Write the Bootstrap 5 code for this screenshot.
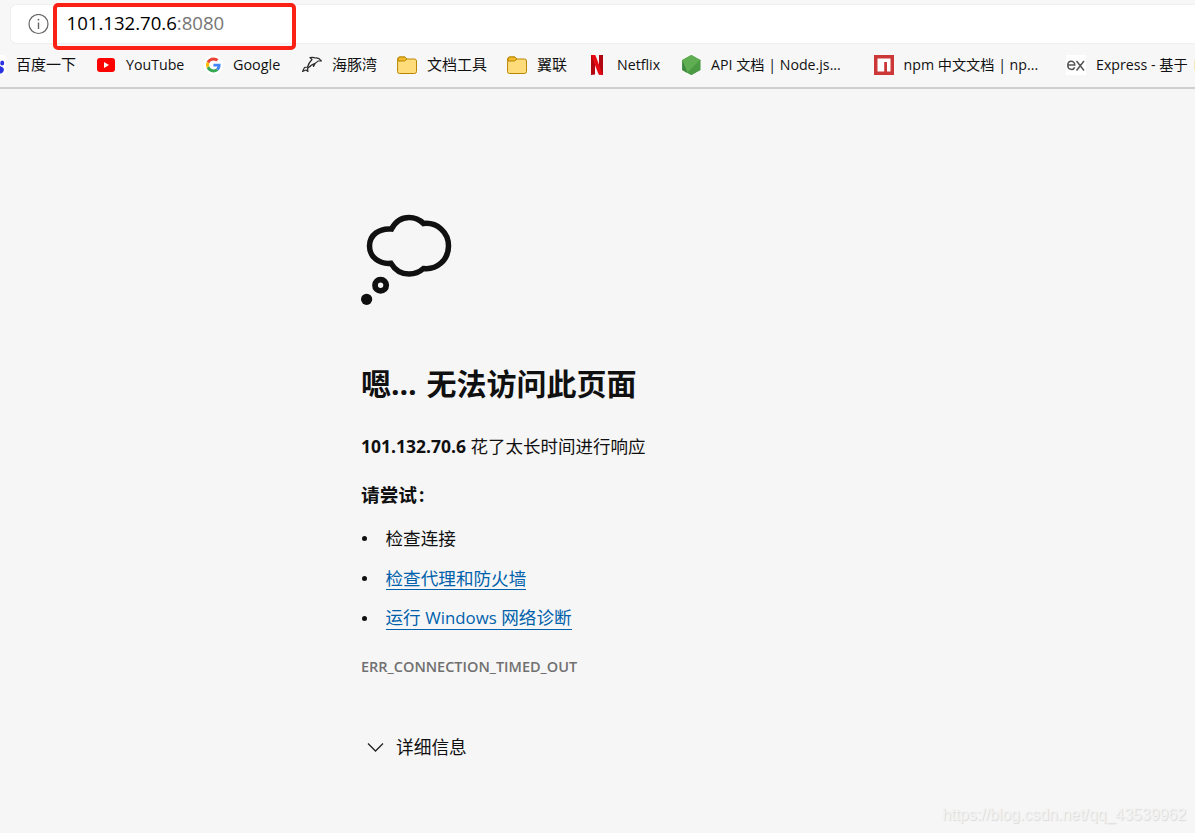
<!DOCTYPE html>
<html lang="zh-CN">
<head>
<meta charset="utf-8">
<title>101.132.70.6</title>
<link href="https://cdn.jsdelivr.net/npm/bootstrap@5.3.0/dist/css/bootstrap.min.css" rel="stylesheet">
<style>
body{background:#f6f6f6;color:#101010;font-family:"Open Sans","Noto Sans CJK SC",sans-serif;height:833px;overflow:hidden}
.chrome{height:89px;background:#f7f7f7;border-bottom:2px solid #cfcfcf}
.address{margin:5px 0 0 11px;height:38px;border-radius:5px 0 0 5px;background:#fff;box-shadow:0 0 2px #ddd}
.info-icon{margin-left:17px}
.url{margin-left:17.500px;font-size:18.6px;line-height:36px;padding-bottom:2px;color:#000;white-space:nowrap}
.url span{color:#767676}
.redbox{left:53px;top:3px;width:243px;height:47px;border:4px solid #fc2115;border-radius:5px}
.marks{height:44px;margin-left:-14px;font-size:14.2px;color:#111}
.mk{flex:none;display:flex;align-items:center;gap:10px;white-space:nowrap;line-height:20px}
.mk svg{flex:none;width:20px;height:20px;display:block}
.zh{font-size:15px}
.mk>.zh{padding-bottom:2px}
.content-col{margin-left:361px;padding-top:125px}
.cloud{display:block;margin-left:-1px}
h1{font-size:30px;font-weight:700;line-height:40px;margin:56px 0 0;word-spacing:2px;white-space:nowrap}
.reason{font-size:17.5px;line-height:24px;margin:30px 0 0}
.try{font-size:18.7px;font-weight:700;line-height:24px;margin:25px 0 0}
.try span{margin-left:2px}
.tips{margin:11px 0 0;padding:0;list-style:none;font-size:17.6px;line-height:40px}
.tips li{display:flex;align-items:center;height:40px}
.tips li::before{content:"";width:5px;height:5px;border-radius:50%;background:#101010;margin:1px 18.500px 0 1px}
.tips a{color:#0061ab;text-decoration:none;border-bottom:1px solid #0061ab;line-height:22px}
.win{font-size:16.8px}
.code{font-size:14.5px;font-weight:600;line-height:20px;color:#707070;margin:19px 0 0}
.more{font-size:17.7px;line-height:24px;margin:58px 0 0 6px;gap:12px}
.watermark{right:9px;bottom:8px;font:15.9px/20px "Liberation Sans",sans-serif;color:#f3f3f3;text-shadow:1px 1px 1px #d8d8d8}
</style>
</head>
<body class="position-relative">
<header class="chrome">
  <div class="d-flex flex-column">
    <div class="address d-flex align-items-center">
      <svg class="info-icon" width="21" height="21" viewBox="0 0 21 21" fill="none" stroke="#666"><circle cx="10.5" cy="10" r="9.5" stroke-width="1.2"/><path d="M10.5 8.5V15" stroke-width="1.4"/><circle cx="10.5" cy="5.7" r=".9" fill="#666" stroke="none"/></svg>
      <div class="url">101.132.70.6<span>:8080</span></div>
    </div>
    <nav class="marks d-flex align-items-center">
      <div class="mk" style="width:110px"><svg viewBox="0 0 20 20"><rect width="20" height="20" rx="3" fill="#fff"/><g fill="#2932e1"><ellipse cx="7" cy="4" rx="2" ry="3"/><ellipse cx="12" cy="4" rx="2" ry="3"/><ellipse cx="16.2" cy="8" rx="2" ry="2.6"/><path d="M10 8c3 0 3 3 6 4 4 2 1 7-2 6.500H6c-4-1-4-4-1-6 2-1 2-4.500 5-4.500z"/></g></svg><span class="zh">百度一下</span></div>
      <div class="mk" style="width:107px"><svg viewBox="0 0 20 20"><rect x="1" y="3" width="18" height="14" rx="3" fill="#f00"/><path d="M8 7l5 3-5 3z" fill="#fff"/></svg><span>YouTube</span></div>
      <div class="mk" style="width:99px"><svg viewBox="0 0 20 20"><circle cx="10.500" cy="10" r="10" fill="#fff"/><g transform="translate(3 2.500) scale(.31)"><path fill="#ea4335" d="M24 9.500c3.500 0 6.700 1.200 9.200 3.600l6.800-6.900C35.900 2.400 30.500 0 24 0 14.600 0 6.500 5.400 2.600 13.200l8 6.200C12.400 13.700 17.700 9.500 24 9.500z"/><path fill="#4285f4" d="M47 24.600c0-1.600-.2-3.100-.4-4.600H24v9h12.900c-.6 3-2.300 5.500-4.700 7.200l7.700 6c4.500-4.200 7.100-10.400 7.100-17.600z"/><path fill="#fbbc05" d="M10.500 28.600a14 14 0 0 1 0-9.200l-8-6.200a24 24 0 0 0 0 21.600z"/><path fill="#34a853" d="M24 48c6.500 0 12-2.100 15.900-5.800l-7.700-6c-2.200 1.500-4.900 2.300-8.200 2.300-6.300 0-11.600-4.200-13.500-9.900l-8 6.200C6.500 42.600 14.600 48 24 48z"/></g></svg><span style="font-size:14.4px">Google</span></div>
      <div class="mk" style="width:95px"><svg viewBox="0 0 20 20" fill="none" stroke="#2b2b2b" stroke-width="1.200" stroke-linejoin="round"><path d="M.5 16.500L2.500 12.500 5.500 12C6.500 8.500 8 6.500 10 4.500L8 2.500C11 2 12.500 2.500 13.500 3 16 2.500 17.500 3.500 19.500 6L16 6C14 8.500 11 9 9 10.500 7.500 12 6.500 12.500 5.500 13.500L6 16.500 4 15zM11 8.800L11.500 11.500 13.500 7.800"/></svg><span class="zh">海豚湾</span></div>
      <div class="mk" style="width:110px"><svg viewBox="0 0 20 20"><path d="M.7 4a2 2 0 0 1 2-2H8l2 2h7.500a2 2 0 0 1 2 2v10.500a2 2 0 0 1-2 2h-15a2 2 0 0 1-2-2z" fill="#ffdc7a" stroke="#b98600"/><path d="M1 6h6.500L10 4 8 2H3a2 2 0 0 0-2 2z" fill="#f0b92e" stroke="#b98600"/></svg><span class="zh">文档工具</span></div>
      <div class="mk" style="width:80px"><svg viewBox="0 0 20 20"><path d="M.7 4a2 2 0 0 1 2-2H8l2 2h7.500a2 2 0 0 1 2 2v10.500a2 2 0 0 1-2 2h-15a2 2 0 0 1-2-2z" fill="#ffdc7a" stroke="#b98600"/><path d="M1 6h6.500L10 4 8 2H3a2 2 0 0 0-2 2z" fill="#f0b92e" stroke="#b98600"/></svg><span class="zh">翼联</span></div>
      <div class="mk" style="width:94px"><svg viewBox="0 0 20 20"><path d="M4 0h4v19.500L4 20zM12 0h4v20l-4-.5z" fill="#b1060f"/><path d="M4 0h4.300L16 20l-4.300-.5z" fill="#e50914"/></svg><span>Netflix</span></div>
      <div class="mk" style="width:192.500px"><svg viewBox="0 0 20 20"><path d="M10.300 0l9 5v10l-9 5-9-5V5z" fill="#469040"/><path d="M10.300 0l9 5v.5L6 18 1.300 15V5z" fill="#5fae52"/><path d="M1.300 5L6.500 17.800 1.300 15z" fill="#3f873f"/><path d="M10.300 20l9-5V4.500L6.500 17.800z" fill="#4b9b45"/></svg><span>API 文档 | Node.js...</span></div>
      <div class="mk" style="width:192.500px"><svg viewBox="0 0 20 20"><path d="M0 0h20v20H0z" fill="#cb3837"/><path d="M3.500 3.500h13v13H13V7h-2.800v9.500H3.500z" fill="#fff"/></svg><span>npm 中文文档 | np...</span></div>
      <div class="mk"><svg viewBox="0 0 20 20"><path d="M0 0h20v20H0z" fill="#fff"/><path d="M1.500 10h7.300c0-5-7-5-7 .2 0 5 5.700 5.400 6.900 2M10.500 6l7.500 9.500M18 6l-7.500 9.500" fill="none" stroke="#555" stroke-width="1.500"/></svg><span>Express - 基于&thinsp; N</span></div>
    </nav>
  </div>
</header>
<div class="redbox position-absolute"></div>
<main class="content-col">
  <svg class="cloud" width="94" height="94" viewBox="360 214 94 94" fill="none" stroke="#101010"><path d="M391.500 229C395.500 221.500 401.500 217.500 409 217.500c6 0 10.500 2 14.500 6C437 222 448.500 232 448.500 246S437 270 423.500 268.500c-4.500 4-8.500 5.500-14.500 5.500-8 0-14-4-18-10.700C379 264.500 369.500 257 369.500 246S379 228 391.500 229z" stroke-width="5.500"/><circle cx="380.600" cy="285.300" r="5.600" stroke-width="5.800"/><circle cx="366.600" cy="299.300" r="5.600" fill="#101010" stroke="none"/></svg>
  <h1>嗯… 无法访问此页面</h1>
  <p class="reason"><b>101.132.70.6</b> 花了太长时间进行响应</p>
  <p class="try">请尝试<span>:</span></p>
  <ul class="tips">
    <li><span>检查连接</span></li>
    <li><a href="#">检查代理和防火墙</a></li>
    <li><a href="#">运行 <span class="win">Windows</span> 网络诊断</a></li>
  </ul>
  <p class="code">ERR_CONNECTION_TIMED_OUT</p>
  <div class="more d-flex align-items-center"><svg width="17" height="10" viewBox="0 0 17 10" fill="none" stroke="#222" stroke-width="1.300"><path d="M1 1.500L8.500 9 16 1.500"/></svg><span>详细信息</span></div>
</main>
<div class="watermark position-absolute">https://blog.csdn.net/qq_43539962</div>
<script src="https://cdn.jsdelivr.net/npm/bootstrap@5.3.0/dist/js/bootstrap.bundle.min.js"></script>
</body>
</html>
